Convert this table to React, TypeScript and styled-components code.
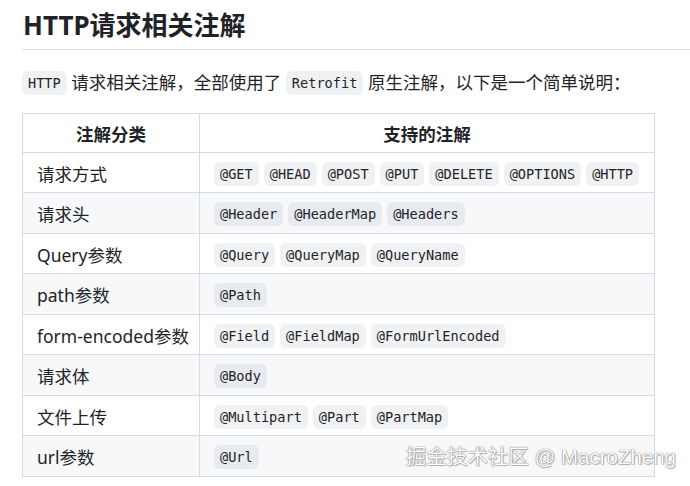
import styled, { createGlobalStyle } from "styled-components";

const GlobalStyle = createGlobalStyle`
  body {
    margin: 0;
    background: #ffffff;
    color: #1f2328;
    font-family: "Noto Sans", "Noto Sans CJK SC", sans-serif;
  }
`;

const Page = styled.div`
  position: relative;
  width: 690px;
  height: 486px;
  overflow: hidden;
  padding-left: 22px;
  box-sizing: border-box;
`;

const Title = styled.h2`
  margin: 9px 0 0;
  padding-bottom: 7px;
  font-size: 26px;
  line-height: 32.5px;
  font-weight: 700;
  border-bottom: 1px solid #dfe3e8;
  padding-left: 1px;
`;

const Paragraph = styled.p`
  margin: 19px 0 18px;
  font-size: 17.5px;
  line-height: 26px;
`;

const Code = styled.code`
  display: inline-block;
  font-family: "DejaVu Sans Mono", "Liberation Mono", monospace;
  font-size: 13.6px;
  line-height: 17px;
  padding: 4px 6px 3px;
  border-radius: 6px;
  background: rgba(175, 184, 193, 0.2);
  vertical-align: 1px;
`;

const Table = styled.table`
  border-collapse: collapse;
  table-layout: fixed;
  width: 633px;
  font-size: 17.5px;
`;

const HeadCell = styled.th<{ $width?: number }>`
  width: ${(p) => (p.$width ? `${p.$width}px` : "auto")};
  border: 1px solid #d5dbe1;
  padding: 7px 14px 5px;
  line-height: 26px;
  font-weight: 700;
  text-align: center;
`;

const Row = styled.tr<{ $striped: boolean }>`
  background: ${(p) => (p.$striped ? "#f6f8fa" : "#ffffff")};
`;

const Cell = styled.td`
  border: 1px solid #d5dbe1;
  padding: 8px 14px 5.5px 14px;
  line-height: 26px;
  white-space: nowrap;
`;

const Chips = styled.div`
  display: flex;
  align-items: center;
  gap: 5px;
  height: 26px;
`;

const Watermark = styled.div`
  position: absolute;
  right: 14px;
  top: 443px;
  font-family: "Liberation Sans", "Noto Sans CJK SC", sans-serif;
  font-size: 20.5px;
  line-height: 28px;
  color: #ffffff;
  text-shadow: 0 0 1px #7a7a7a, 0 0 1px #7a7a7a, 1px 1px 1px rgba(0, 0, 0, 0.25);
  white-space: nowrap;
`;

const rows: [string, string[]][] = [
  ["请求方式", ["@GET", "@HEAD", "@POST", "@PUT", "@DELETE", "@OPTIONS", "@HTTP"]],
  ["请求头", ["@Header", "@HeaderMap", "@Headers"]],
  ["Query参数", ["@Query", "@QueryMap", "@QueryName"]],
  ["path参数", ["@Path"]],
  ["form-encoded参数", ["@Field", "@FieldMap", "@FormUrlEncoded"]],
  ["请求体", ["@Body"]],
  ["文件上传", ["@Multipart", "@Part", "@PartMap"]],
  ["url参数", ["@Url"]],
];

export default function App() {
  return (
    <Page>
      <GlobalStyle />
      <Title>HTTP请求相关注解</Title>
      <Paragraph>
        <Code>HTTP</Code> 请求相关注解，全部使用了 <Code>Retrofit</Code> 原生注解，以下是一个简单说明：
      </Paragraph>
      <Table>
        <thead>
          <tr>
            <HeadCell $width={148}>注解分类</HeadCell>
            <HeadCell>支持的注解</HeadCell>
          </tr>
        </thead>
        <tbody>
          {rows.map(([kind, list], i) => (
            <Row key={kind} $striped={i % 2 === 1}>
              <Cell>{kind}</Cell>
              <Cell>
                <Chips>
                  {list.map((a) => (
                    <Code key={a}>{a}</Code>
                  ))}
                </Chips>
              </Cell>
            </Row>
          ))}
        </tbody>
      </Table>
      <Watermark>掘金技术社区 @ MacroZheng</Watermark>
    </Page>
  );
}
